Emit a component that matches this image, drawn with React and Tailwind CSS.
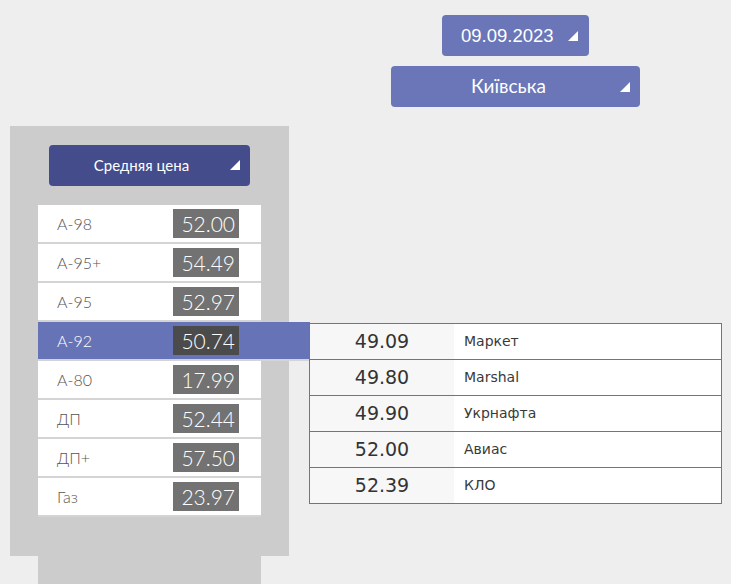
import React from "react";

const fuels = [
  { name: "А-98", price: "52.00" },
  { name: "А-95+", price: "54.49" },
  { name: "А-95", price: "52.97" },
  { name: "А-92", price: "50.74", active: true },
  { name: "А-80", price: "17.99" },
  { name: "ДП", price: "52.44" },
  { name: "ДП+", price: "57.50" },
  { name: "Газ", price: "23.97" },
];

const stations = [
  { price: "49.09", name: "Маркет" },
  { price: "49.80", name: "Marshal" },
  { price: "49.90", name: "Укрнафта" },
  { price: "52.00", name: "Авиас" },
  { price: "52.39", name: "КЛО" },
];

function Corner({ className = "" }) {
  return (
    <svg width="10" height="10" viewBox="0 0 10 10" className={className}>
      <polygon points="10,0 10,10 0,10" fill="#fff" />
    </svg>
  );
}

export default function App() {
  const gothic = { fontFamily: "Lato, 'Open Sans', sans-serif" };

  return (
    <div className="w-[731px] h-[584px] bg-[#eeeeee] overflow-hidden">
      {/* top selectors */}
      <div className="flex flex-col items-start pt-[15px]">
        <button
          className="ml-[442px] w-[147px] h-[41px] rounded-[4px] bg-[#6a76b8] text-white flex items-center relative"
          style={{ fontFamily: "'Liberation Sans', Arial, sans-serif" }}
        >
          <span className="text-[18.5px] ml-[19px]">09.09.2023</span>
          <Corner className="absolute right-[11px] top-[16px]" />
        </button>
        <button
          className="mt-[10px] ml-[391px] w-[249px] h-[41px] rounded-[4px] bg-[#6a76b8] text-white flex items-center justify-center relative"
          style={gothic}
        >
          <span className="text-[19px] mr-[14px]">Київська</span>
          <Corner className="absolute right-[10px] top-[16px]" />
        </button>
      </div>

      {/* left panel */}
      <div className="mt-[19px] flex items-start">
        <div className="ml-[10px] flex flex-col shrink-0">
          <div className="w-[279px] h-[430px] bg-[#cccccc] pt-[19px]">
            <button
              className="ml-[39px] w-[201px] h-[41px] rounded-[4px] bg-[#454c8b] text-white flex items-center justify-center relative"
              style={gothic}
            >
              <span className="text-[15px] mr-[16px]">Средняя цена</span>
              <Corner className="absolute right-[10px] top-[15px]" />
            </button>
            <div className="mt-[19px] ml-[28px] flex flex-col">
              {fuels.map((f) => (
                <div
                  key={f.name}
                  className={
                    "shrink-0 h-[39px] flex items-center border-b-2 border-[#d4d4d4] " +
                    (f.active
                      ? "w-[272px] bg-[#6673b6] text-white"
                      : "w-[223px] bg-white text-[#555555]")
                  }
                  style={gothic}
                >
                  <span className="w-[135px] pl-[19px] text-[16px] font-light">{f.name}</span>
                  <span
                    className={
                      "w-[66px] h-[29px] flex items-center justify-end pr-[4px] text-[21px] font-light text-white " +
                      (f.active ? "bg-[#4b4b4b]" : "bg-[#727272]")
                    }
                  >
                    {f.price}
                  </span>
                </div>
              ))}
            </div>
          </div>
          <div className="ml-[28px] w-[223px] h-[40px] bg-[#cccccc]" />
        </div>

        {/* right table */}
        <div
          className="mt-[197px] ml-[20px] w-[413px] shrink-0 border border-[#6b7399] bg-white"
          style={{ fontFamily: "'DejaVu Sans', Verdana, sans-serif" }}
        >
          {stations.map((s, i) => (
            <div
              key={s.name}
              className={
                "flex " + (i > 0 ? "h-[36px] border-t border-[#6b7399]" : "h-[35px]")
              }
            >
              <div className="w-[144px] bg-[#f7f7f7] flex items-center justify-center text-[19px] text-[#333333]">
                {s.price}
              </div>
              <div className="flex-1 flex items-center pl-[10px] text-[14px] text-[#3a3a3a]">
                {s.name}
              </div>
            </div>
          ))}
        </div>
      </div>
    </div>
  );
}
